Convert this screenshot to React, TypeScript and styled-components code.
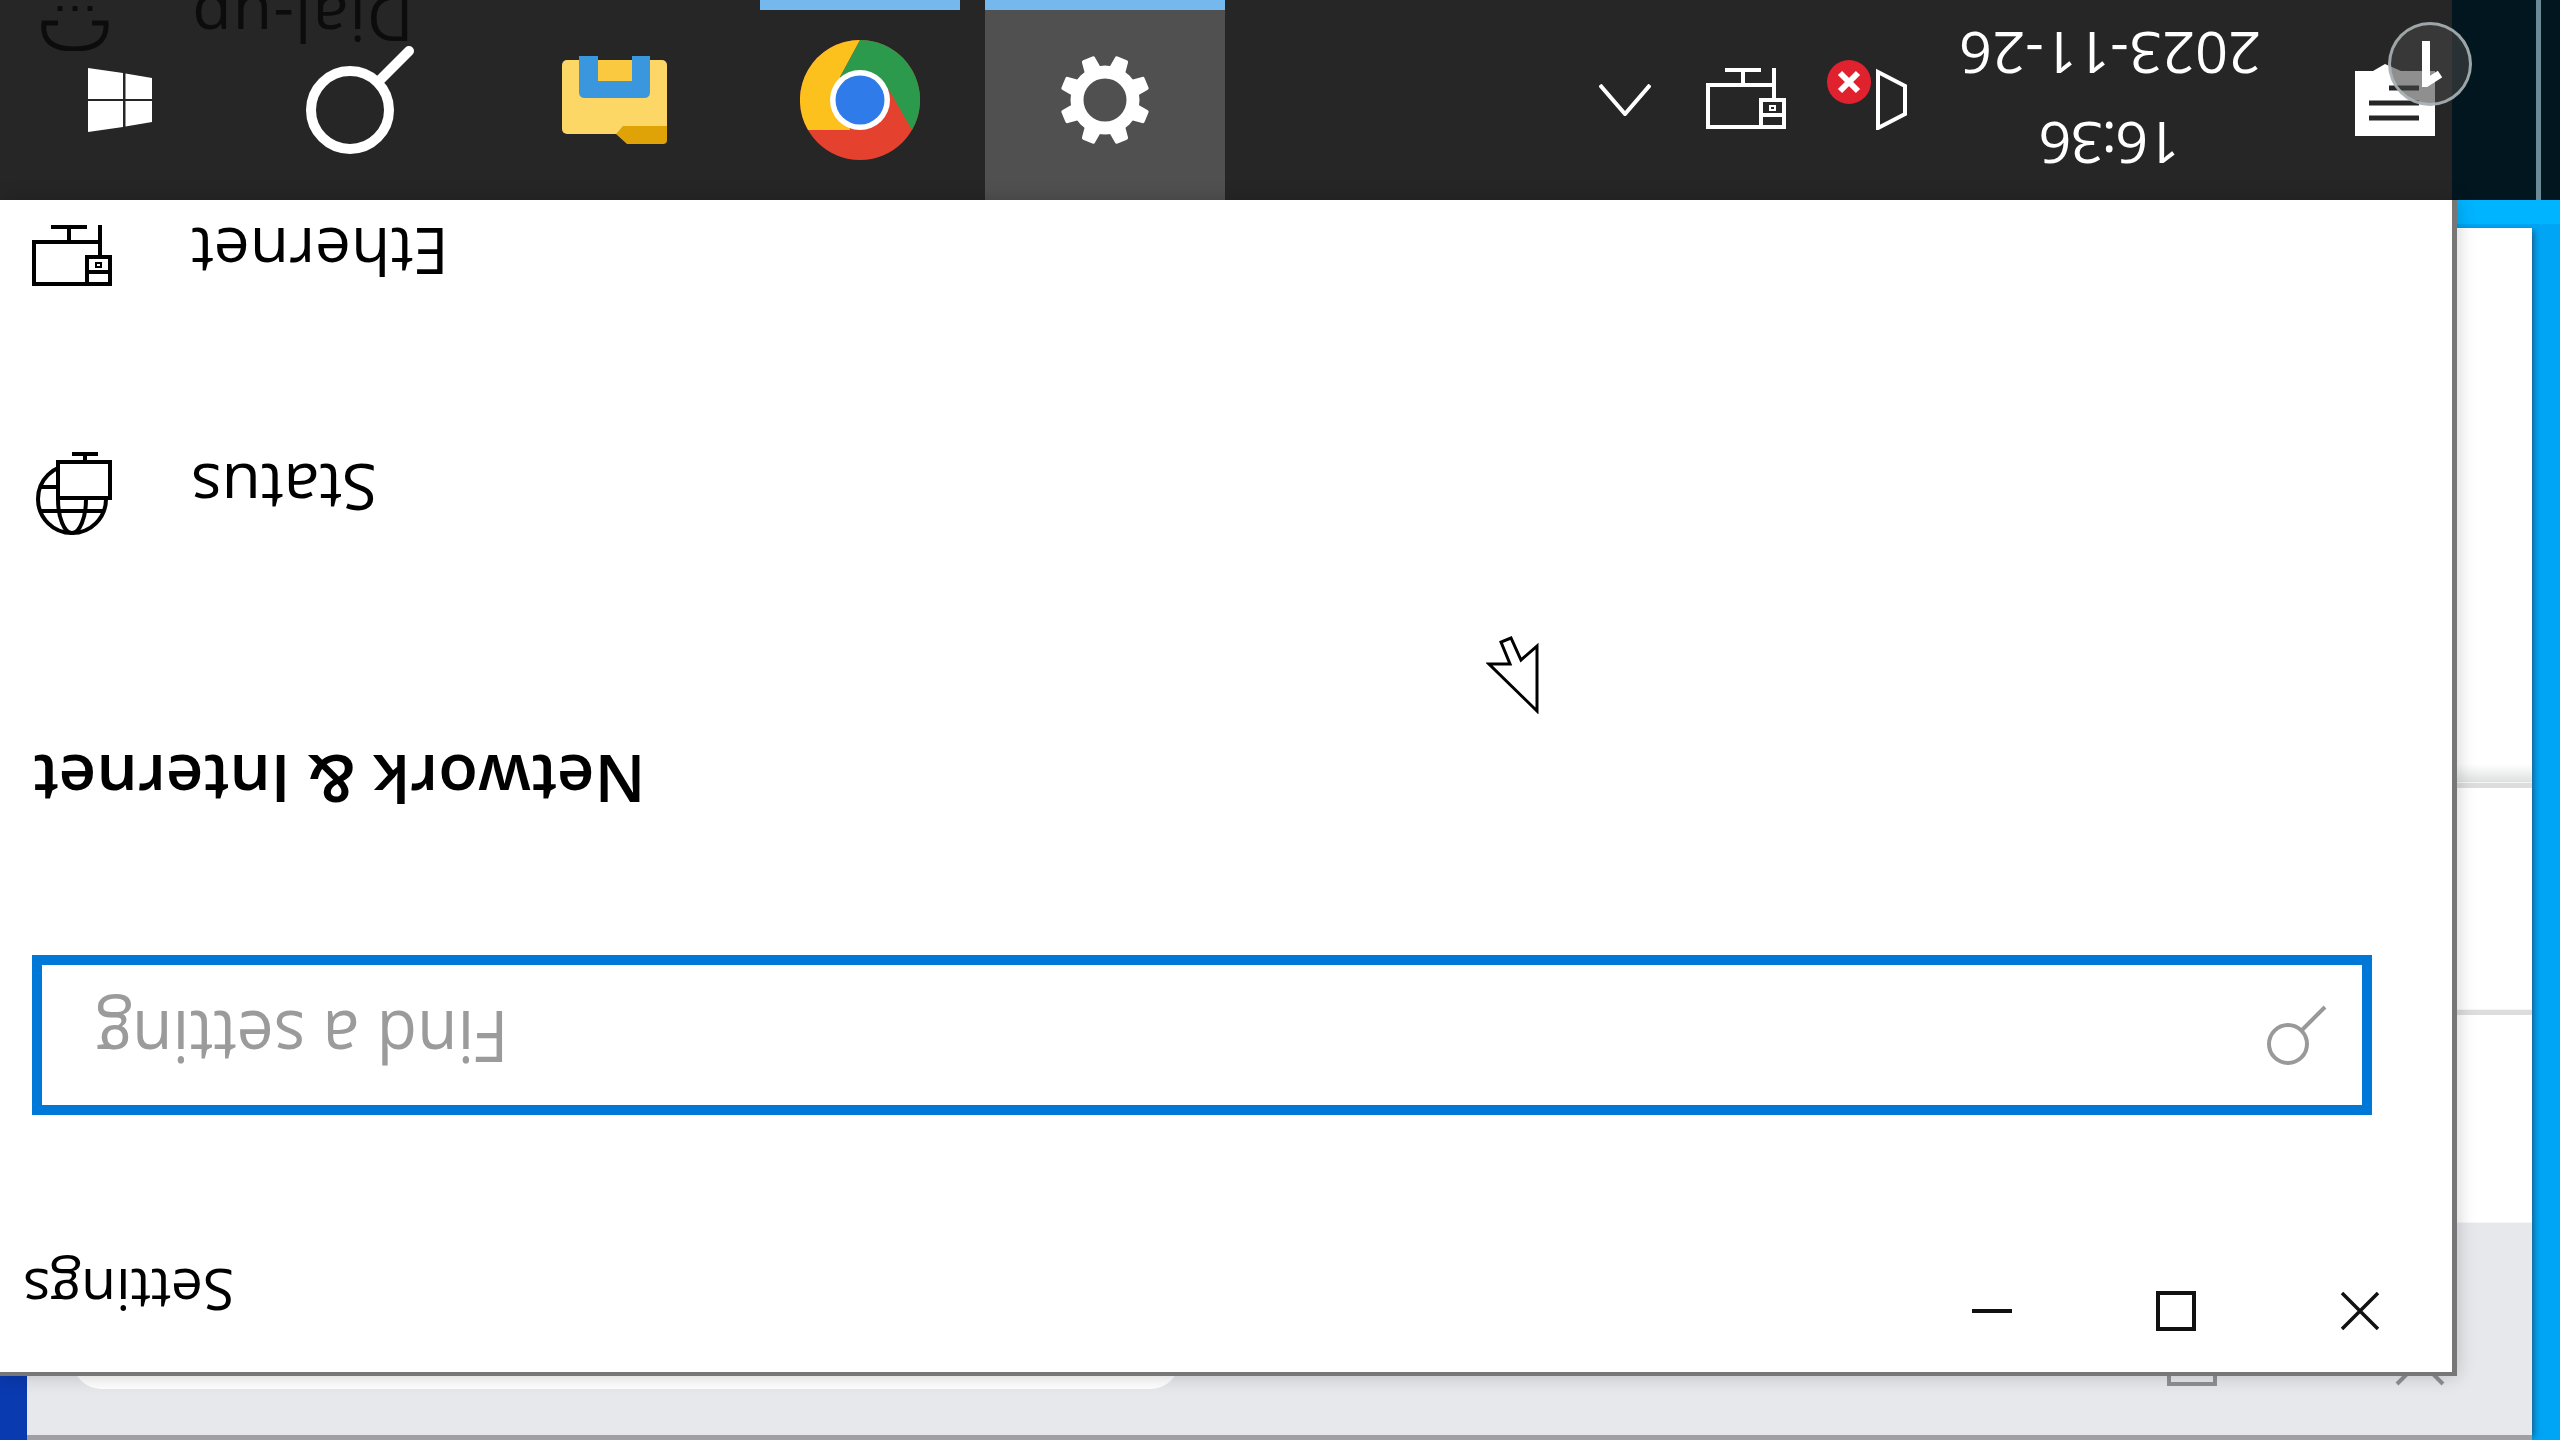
import React from "react";
import styled, { createGlobalStyle, css } from "styled-components";

const GlobalStyle = createGlobalStyle`
  html, body {
    margin: 0;
    padding: 0;
    background: #000;
  }
  body {
    font-family: "Open Sans", "Noto Sans", sans-serif;
  }
`;

//Everything on this desktop is drawn upside down, part by part
const upsideDown = css`
  display: inline-block;
  transform: rotate(180deg);
  white-space: nowrap;
`;

const Screen = styled.div`
  width: 2560px;
  height: 1440px;
  overflow: hidden;
  display: flex;
  flex-direction: column;
`;

const TopRow = styled.div`
  height: 200px;
  display: flex;
  flex-shrink: 0;
`;

const Taskbar = styled.div`
  width: 2452px;
  display: flex;
  align-items: stretch;
  background: #262626;
  padding-right: 17px;
  box-sizing: border-box;
`;

const AppTiles = styled.div`
  display: flex;
  gap: 5px;
  margin-left: 15px;
`;

const Tile = styled.div<{ $active?: boolean; $running?: boolean }>`
  position: relative;
  width: 240px;
  display: flex;
  align-items: center;
  justify-content: center;
  background: ${(props) => (props.$active ? "#505050" : "transparent")};

  ${(props) =>
    props.$running &&
    css`
      &::before {
        content: "";
        position: absolute;
        top: 0;
        height: 10px;
        width: ${props.$active ? "240px" : "200px"};
        background: #75b8ee;
      }
    `}
`;

const Tray = styled.div`
  margin-left: auto;
  display: flex;
  align-items: center;
`;

const TrayItem = styled.div<{ $gap: number; $lift?: number }>`
  display: flex;
  margin-left: ${(props) => props.$gap}px;
  margin-bottom: ${(props) => props.$lift || 0}px;
`;

const Clock = styled.div`
  width: 298px;
  height: 200px;
  display: flex;
  flex-direction: column;
  align-items: center;
  color: #fff;
  font-size: 57.5px;
  line-height: 60px;
  padding-top: 24px;
  box-sizing: border-box;
`;

const ClockDate = styled.span`
  ${upsideDown};
  letter-spacing: 0.2px;
`;

const ClockTime = styled.span`
  ${upsideDown};
  margin-top: 30px;
  letter-spacing: -1.4px;
`;

const DownloadBadge = styled.div`
  position: absolute;
  left: 2388px;
  top: 22px;
  width: 84px;
  height: 84px;
  box-sizing: border-box;
  border-radius: 50%;
  border: 3px solid rgba(176, 186, 188, 0.85);
  background: rgba(68, 68, 68, 0.6);
  display: flex;
  align-items: center;
  justify-content: center;
`;

const WallpaperStrip = styled.div`
  flex: 1;
  background: #02161f;
  display: flex;
`;

const StripLine = styled.div`
  width: 5px;
  margin-left: 84px;
  background: #6d8a97;
`;

const Desktop = styled.div`
  position: relative;
  flex: 1;
  display: flex;
  background: linear-gradient(90deg, #0a3ab0 0 1000px, #00a5f5 1000px);
`;

const TopEdgeGlow = styled.div`
  position: absolute;
  left: 1000px;
  right: 0;
  top: 0;
  height: 24px;
  background: #00b4ff;
`;

const BackWindow = styled.div`
  position: relative;
  flex: 1;
  margin: 28px 28px 0 27px;
  display: flex;
  flex-direction: column;
  box-shadow: 5px 0 6px -3px rgba(30, 70, 100, 0.75);
`;

const BackRow = styled.div<{ $height: number; $shaded?: boolean }>`
  height: ${(props) => props.$height}px;
  background: ${(props) =>
    props.$shaded
      ? "linear-gradient(180deg, #fff 0 536px, #dcdfdf 555px)"
      : "#fff"};
  border-bottom: 1px solid #f5f5f5;
  box-sizing: border-box;
`;

const BackDivider = styled.div`
  height: 5px;
  background: #dddddd;
`;

const BackFooter = styled.div`
  flex: 1;
  display: flex;
  align-items: flex-start;
  justify-content: space-between;
  background: #e6e8ec;
  border-bottom: 5px solid #a0a0a4;
  padding: 0 87px 0 46px;
`;

const FooterField = styled.div`
  width: 1106px;
  height: 166px;
  background: #fff;
  border-radius: 0 0 28px 28px;
`;

const FooterIcons = styled.div`
  display: flex;
  gap: 178px;
  margin-top: 123px;
`;

const SettingsWindow = styled.div`
  position: absolute;
  left: 0;
  top: 0;
  width: 2457px;
  height: 1176px;
  box-sizing: border-box;
  display: flex;
  flex-direction: column;
  background: #fff;
  border-right: 5px solid #777;
  border-bottom: 4px solid #777;
  box-shadow: 0 0 18px rgba(0, 0, 0, 0.2);
`;

const NavList = styled.div`
  margin-top: -305px;
`;

const NavRow = styled.div`
  height: 236px;
  display: flex;
  align-items: center;
`;

const NavIcon = styled.div`
  width: 192px;
  padding: 12px 0 0 32px;
  box-sizing: border-box;
  display: flex;
`;

const NavLabel = styled.span`
  ${upsideDown};
  margin: 5px 0 0 -1px;
  font-size: 64px;
  line-height: 72px;
  color: #000;
`;

const DimNavLabel = styled(NavLabel)`
  margin-top: 11px;
  letter-spacing: 1.3px;
  color: #0c0c0c;
`;

const SectionTitle = styled.div`
  margin: 144px 0 0 33px;
  height: 66px;
  font-size: 65px;
  line-height: 66px;
  font-weight: 600;
  color: #000;
  span {
    ${upsideDown};
    letter-spacing: 0.1px;
  }
`;

const SearchBox = styled.div`
  width: 2340px;
  height: 160px;
  margin: 142px 0 0 32px;
  box-sizing: border-box;
  border: 10px solid #0078d7;
  display: flex;
  align-items: center;
  justify-content: space-between;
  padding: 0 35px 0 54px;
`;

const Placeholder = styled.span`
  ${upsideDown};
  transform: rotate(180deg) scaleY(1.08);
  margin-top: 8px;
  font-size: 66px;
  line-height: 80px;
  color: #9b9b9b;
  letter-spacing: 0.1px;
`;

const TitleBar = styled.div`
  margin-top: auto;
  height: 122px;
  display: flex;
  justify-content: space-between;
`;

const WindowTitle = styled.span`
  ${upsideDown};
  height: 72px;
  margin: 5px 0 0 23px;
  font-size: 57px;
  line-height: 72px;
  color: #000;
`;

const CaptionButtons = styled.div`
  display: flex;
`;

const CaptionButton = styled.div`
  width: 184px;
  display: flex;
  align-items: center;
  justify-content: center;
`;

const Pointer = styled.svg`
  position: absolute;
  left: 1486px;
  top: 434px;
`;

function WindowsLogo() {
  return (
    <svg width="64" height="64" viewBox="0 0 64 64" fill="#fff">
      <polygon points="0,0 35,5 35,31 0,31" />
      <polygon points="37.5,5.5 64,10 64,31 37.5,31" />
      <polygon points="0,33 35,33 35,59 0,64" />
      <polygon points="37.5,33 64,33 64,54 37.5,58.5" />
    </svg>
  );
}

function SearchGlyph() {
  return (
    <svg width="108" height="108" viewBox="0 0 108 108" fill="none">
      <circle cx="44" cy="64" r="39" stroke="#fff" strokeWidth="10" />
      <path d="M74 34 L103 5" stroke="#fff" strokeWidth="10" strokeLinecap="round" />
    </svg>
  );
}

function FolderIcon() {
  return (
    <svg width="106" height="88" viewBox="0 0 106 88">
      <rect x="0" y="4" width="105" height="74" rx="5" fill="#fdd765" />
      <path d="M54 78 L61 70 H105 V84 Q105 88 101 88 H65 Z" fill="#dfa308" />
      <path
        d="M17 0 H36 V25 H70 V0 H88 V36 Q88 42 82 42 H23 Q17 42 17 36 Z"
        fill="#3a96dd"
      />
      <rect x="36" y="4" width="34" height="21" fill="#fbc93f" />
    </svg>
  );
}

function ChromeLogo() {
  return (
    <svg width="120" height="120" viewBox="0 0 120 120">
      <circle cx="60" cy="60" r="60" fill="#e4412f" />
      <path d="M60 0 A60 60 0 0 0 8 90 L50 90 L40 37 Z" fill="#fcc11d" />
      <path d="M60 0 A60 60 0 0 1 112 90 L89 50 L60 60 L40 37 Z" fill="#2b9a4d" />
      <circle cx="60" cy="60" r="30" fill="#fff" />
      <circle cx="60" cy="60" r="24.5" fill="#2f7bea" />
    </svg>
  );
}

function GearIcon() {
  const teeth = [22.5, 67.5, 112.5, 157.5, 202.5, 247.5, 292.5, 337.5];
  return (
    <svg width="92" height="92" viewBox="-46 -46 92 92" fill="#fff">
      {teeth.map((angle) => (
        <path
          key={angle}
          d="M-9 -28 L-7 -43 Q-7 -45 -5 -45 H5 Q7 -45 7 -43 L9 -28 Z"
          transform={`rotate(${angle})`}
        />
      ))}
      <circle r="28" fill="none" stroke="#fff" strokeWidth="13" />
    </svg>
  );
}

function EthernetIcon({ color }: { color: string }) {
  return (
    <svg width="80" height="62" viewBox="0 0 80 62" fill="none" stroke={color} strokeWidth="4">
      <path d="M55 60 H2 V18 H69" />
      <path d="M68 1 V33" />
      <path d="M19 3 H55" />
      <path d="M37 3 V18" />
      <rect x="55" y="33" width="23" height="27" />
      <path d="M57 48 H76" />
      <rect x="64" y="39" width="5" height="4" strokeWidth="2" />
    </svg>
  );
}

function StatusIcon() {
  return (
    <svg width="80" height="88" viewBox="0 -5 80 88" fill="none" stroke="#000" strokeWidth="4">
      <circle cx="40" cy="47" r="34" />
      <ellipse cx="40" cy="47" rx="14" ry="34" />
      <path d="M7 35 H28" />
      <path d="M9 59 H71" />
      <rect x="26" y="10" width="52" height="36" fill="#fff" />
      <path d="M53 2 V10" />
      <path d="M40 2 H66" />
    </svg>
  );
}

function DialUpIcon() {
  return (
    <svg width="80" height="64" viewBox="0 0 80 64" fill="none" stroke="#0c0c0c" strokeWidth="5">
      <path d="M26 36 H12 Q9 62 42 62 Q76 62 74 36 H60" />
      <path d="M28 19 V24" />
      <path d="M58 19 V24" />
      <path d="M43 19 V24" />
    </svg>
  );
}

function ChevronIcon() {
  return (
    <svg width="52" height="32" viewBox="0 0 52 32" fill="none">
      <path d="M1 1 L26 30 L51 1" stroke="#fff" strokeWidth="4" />
    </svg>
  );
}

function MutedSpeaker() {
  return (
    <svg width="80" height="70" viewBox="0 0 80 70" fill="none">
      <path d="M51 12 L78 26 V54 L51 68 Z" stroke="#fff" strokeWidth="4" />
      <circle cx="22" cy="22" r="22" fill="#e0222e" />
      <path d="M13 13 L31 31 M31 13 L13 31" stroke="#fff" strokeWidth="6" />
    </svg>
  );
}

function NotificationIcon() {
  return (
    <svg width="80" height="72" viewBox="0 0 80 72">
      <path d="M0 7 H18 L30 0 L46 7 H80 V72 H0 Z" fill="#fff" />
      <path d="M34 24 H64 M14 39 H64 M14 54 H64" stroke="#262626" strokeWidth="5" />
    </svg>
  );
}

function DownloadArrow() {
  return (
    <svg width="24" height="46" viewBox="0 0 24 46" fill="none">
      <path d="M8 0 V42 L22 33" stroke="#fff" strokeWidth="8" />
    </svg>
  );
}

function SearchFieldIcon() {
  return (
    <svg width="60" height="60" viewBox="0 0 60 60" fill="none" stroke="#999" strokeWidth="4">
      <circle cx="21" cy="39" r="19" />
      <path d="M35 25 L58 2" />
    </svg>
  );
}

function MinimizeIcon() {
  return (
    <svg width="40" height="40" viewBox="0 0 40 40">
      <path d="M0 20 H40" stroke="#111" strokeWidth="4" />
    </svg>
  );
}

function MaximizeIcon() {
  return (
    <svg width="40" height="40" viewBox="0 0 40 40" fill="none">
      <rect x="2" y="2" width="36" height="36" stroke="#111" strokeWidth="4" />
    </svg>
  );
}

function CloseIcon() {
  return (
    <svg width="40" height="40" viewBox="0 0 40 40" fill="none">
      <path d="M2 2 L38 38 M38 2 L2 38" stroke="#111" strokeWidth="3.5" />
    </svg>
  );
}

function BackMaximizeIcon() {
  return (
    <svg width="50" height="40" viewBox="0 0 50 40" fill="none">
      <rect x="2" y="-10" width="46" height="48" stroke="#8f9093" strokeWidth="4" />
    </svg>
  );
}

function BackCloseIcon() {
  return (
    <svg width="50" height="40" viewBox="0 0 50 40" fill="none">
      <path d="M2 38 L48 -8 M48 38 L2 -8" stroke="#8f9093" strokeWidth="4" />
    </svg>
  );
}

export default function App() {
  return (
    <>
      <GlobalStyle />
      <Screen>
        <TopRow>
          <Taskbar>
            <Tile>
              <WindowsLogo />
            </Tile>
            <Tile>
              <SearchGlyph />
            </Tile>
            <AppTiles>
              <Tile>
                <FolderIcon />
              </Tile>
              <Tile $running>
                <ChromeLogo />
              </Tile>
              <Tile $running $active>
                <GearIcon />
              </Tile>
            </AppTiles>
            <Tray>
              <TrayItem $gap={0}>
                <ChevronIcon />
              </TrayItem>
              <TrayItem $gap={55} $lift={4}>
                <EthernetIcon color="#fff" />
              </TrayItem>
              <TrayItem $gap={41} $lift={10}>
                <MutedSpeaker />
              </TrayItem>
              <TrayItem $gap={54}>
                <Clock>
                  <ClockDate>2023-11-26</ClockDate>
                  <ClockTime>16:36</ClockTime>
                </Clock>
              </TrayItem>
              <TrayItem $gap={96}>
                <NotificationIcon />
              </TrayItem>
            </Tray>
          </Taskbar>
          <WallpaperStrip>
            <StripLine />
          </WallpaperStrip>
          <DownloadBadge>
            <DownloadArrow />
          </DownloadBadge>
        </TopRow>
        <Desktop>
          <TopEdgeGlow />
          <BackWindow>
            <BackRow $height={555} $shaded />
            <BackDivider />
            <BackRow $height={222} />
            <BackDivider />
            <BackRow $height={208} />
            <BackFooter>
              <FooterField />
              <FooterIcons>
                <BackMaximizeIcon />
                <BackCloseIcon />
              </FooterIcons>
            </BackFooter>
          </BackWindow>
          <SettingsWindow>
            <NavList>
              <NavRow>
                <NavIcon>
                  <DialUpIcon />
                </NavIcon>
                <DimNavLabel>Dial-up</DimNavLabel>
              </NavRow>
              <NavRow>
                <NavIcon>
                  <EthernetIcon color="#000" />
                </NavIcon>
                <NavLabel>Ethernet</NavLabel>
              </NavRow>
              <NavRow>
                <NavIcon>
                  <StatusIcon />
                </NavIcon>
                <NavLabel>Status</NavLabel>
              </NavRow>
            </NavList>
            <SectionTitle>
              <span>Network &amp; Internet</span>
            </SectionTitle>
            <SearchBox>
              <Placeholder>Find a setting</Placeholder>
              <SearchFieldIcon />
            </SearchBox>
            <TitleBar>
              <WindowTitle>Settings</WindowTitle>
              <CaptionButtons>
                <CaptionButton>
                  <MinimizeIcon />
                </CaptionButton>
                <CaptionButton>
                  <MaximizeIcon />
                </CaptionButton>
                <CaptionButton>
                  <CloseIcon />
                </CaptionButton>
              </CaptionButtons>
            </TitleBar>
            <Pointer width="54" height="80" viewBox="0 0 54 80" fill="#fff" stroke="#000" strokeWidth="3">
              <path d="M51 77 L3 30 H24 L15 8 L25 4 L35 26 L51 12 Z" />
            </Pointer>
          </SettingsWindow>
        </Desktop>
      </Screen>
    </>
  );
}
